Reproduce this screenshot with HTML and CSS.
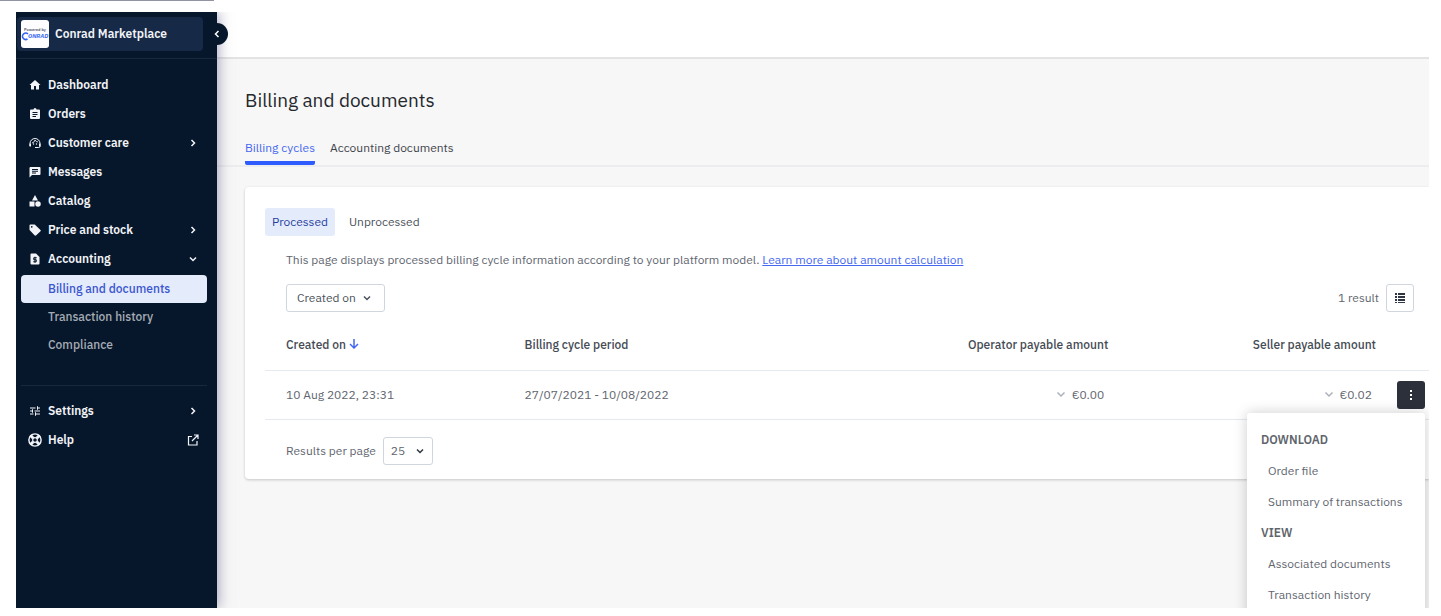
FILE: index.html
```html
<!DOCTYPE html>
<html lang="en">
<head>
<meta charset="utf-8">
<title>Billing and documents</title>
<link rel="stylesheet" href="styles.css">
</head>
<body>
<div class="strip"></div>
<div class="frame">
  <aside class="sidebar">
    <div class="brand-area">
      <div class="brand">
        <svg class="brand-logo" viewBox="0 0 28 28" aria-hidden="true">
          <rect width="28" height="28" rx="3" fill="#fdfdff"/>
          <text x="14" y="11" text-anchor="middle" font-size="4" fill="#555b70">Powered by</text>
          <path d="M7 14A3.200 3.200 0 1 0 6.500 19" fill="none" stroke="#2f62f0" stroke-width="1.500"/>
          <text x="7" y="18" font-size="6" font-weight="700" font-style="italic" fill="#3b6cf2">ONRAD</text>
        </svg>
        <span>Conrad Marketplace</span>
      </div>
      <button class="collapse" aria-label="Collapse menu">
        <svg class="ico-s" viewBox="0 0 10 10"><path d="M6.500 2L3.500 5l3 3" class="line"/></svg>
      </button>
    </div>
    <nav class="nav">
      <a class="item" href="#"><svg class="ico" viewBox="0 0 24 24"><path d="M10 21v-7h4v7h6v-9h3L12 2 1 12h3v9z"/></svg><span>Dashboard</span></a>
      <a class="item" href="#"><svg class="ico" viewBox="0 0 24 24"><path fill-rule="evenodd" d="M20 3h-5a3 3 0 0 0-6 0H4a2 2 0 0 0-2 2v15a2 2 0 0 0 2 2h16a2 2 0 0 0 2-2V5a2 2 0 0 0-2-2zM7 8h10v2H7zm0 4h10v2H7zm0 4h7v2H7z"/></svg><span>Orders</span></a>
      <a class="item" href="#"><svg class="ico" viewBox="0 0 24 24"><path d="M2 18v-5a10 10 0 0 1 20 0v6q0 2-3 2h-7" fill="none" stroke="currentColor" stroke-width="2"/><path d="M1 13h3v6H1zM20 13h3v6h-3z"/><circle cx="9" cy="14" r="1.300"/><circle cx="15" cy="14" r="1.300"/><path d="M6 12q5-1 6-6 2 4 6 4" fill="none" stroke="currentColor" stroke-width="1.700"/></svg><span>Customer care</span><svg class="ico-s" viewBox="0 0 10 10"><path d="M3.500 2l3 3-3 3" class="line"/></svg></a>
      <a class="item" href="#"><svg class="ico" viewBox="0 0 24 24"><path fill-rule="evenodd" d="M3 2a2 2 0 0 0-2 2v19l5-5h15a2 2 0 0 0 2-2V4a2 2 0 0 0-2-2zM6 6h12v2H6zm0 3.500h12v2H6zM6 13h8v2H6z"/></svg><span>Messages</span></a>
      <a class="item" href="#"><svg class="ico" viewBox="0 0 24 24"><path d="M12 0l6 11H6zM1 13h10v10H1z"/><circle cx="18" cy="18" r="5.500"/></svg><span>Catalog</span></a>
      <a class="item" href="#"><svg class="ico" viewBox="0 0 24 24"><path fill-rule="evenodd" d="M23 12L13 2.500A2 2 0 0 0 11 1H3a2 2 0 0 0-2 2v8q0 1 .6 1.500L11 22.500q2 1.500 3.500 0l8.500-8q1.200-1.300 0-2.500zM5.500 7.500a1.800 1.800 0 1 1 0-3.600 1.800 1.800 0 0 1 0 3.600z"/></svg><span>Price and stock</span><svg class="ico-s" viewBox="0 0 10 10"><path d="M3.500 2l3 3-3 3" class="line"/></svg></a>
      <a class="item" href="#"><svg class="ico" viewBox="0 0 24 24"><path d="M14 1H5a2 2 0 0 0-2 2v18a2 2 0 0 0 2 2h14a2 2 0 0 0 2-2V8z"/><path d="M15.500 9.500H9.500v4h5v4h-6M12 7.500v12" fill="none" stroke="#07172b" stroke-width="2"/></svg><span>Accounting</span><svg class="ico-s" viewBox="0 0 10 10"><path d="M2 3.500l3 3 3-3" class="line"/></svg></a>
      <div class="subnav">
        <a class="sub active" href="#">Billing and documents</a>
        <a class="sub" href="#">Transaction history</a>
        <a class="sub" href="#">Compliance</a>
      </div>
      <div class="lower">
        <a class="item" href="#"><svg class="ico" viewBox="0 0 24 24"><path d="M2 6h11M17 6h5M17 2.500v7M2 12h5M11 12h11M7 8.500v7M2 18h7M13 18h9M13 14.500v7" fill="none" stroke="currentColor" stroke-width="2"/></svg><span>Settings</span><svg class="ico-s" viewBox="0 0 10 10"><path d="M3.500 2l3 3-3 3" class="line"/></svg></a>
        <a class="item" href="#"><svg class="ico help" viewBox="0 0 24 24"><circle cx="12" cy="12" r="10.500" fill="none" stroke="currentColor" stroke-width="2.500"/><path d="M4 4l5 5M20 4l-5 5M4 20l5-5M20 20l-5-5" stroke="currentColor" stroke-width="5"/><circle cx="12" cy="12" r="4" fill="#07172b" stroke="currentColor" stroke-width="2"/></svg><span>Help</span><svg class="ico ext" viewBox="0 0 24 24"><path d="M10 5H3v17h17v-8M14 2h8v8M22 2L10 14" fill="none" stroke="currentColor" stroke-width="2.400"/></svg></a>
      </div>
    </nav>
  </aside>
  <main class="main">
    <div class="topbar"></div>
    <header class="heading">
      <h1>Billing and documents</h1>
      <nav class="tabs"><a class="tab current" href="#">Billing cycles</a><a class="tab" href="#">Accounting documents</a></nav>
    </header>
    <section class="card">
      <div class="pills"><button class="pill on">Processed</button><button class="pill">Unprocessed</button></div>
      <p class="intro">This page displays processed billing cycle information according to your platform model. <a href="#">Learn more about amount calculation</a></p>
      <div class="toolbar">
        <button class="filter">Created on <svg class="ico-s" viewBox="0 0 10 10"><path d="M2 3.500l3 3 3-3" class="line"/></svg></button>
        <div class="result"><span>1 result</span><button class="square" aria-label="Columns"><svg viewBox="0 0 12 12" width="12" height="12"><path d="M1 1h2v2H1zM4 1h7v2H4zM1 4h2v2H1zM4 4h7v2H4zM1 7h2v2H1zM4 7h7v2H4zM1 10h2v1H1zM4 10h7v1H4z"/></svg></button></div>
      </div>
      <table class="table">
        <thead><tr>
          <th class="c-date">Created on <svg class="sort" viewBox="0 0 10 10"><path d="M5 0v9M1 5l4 4 4-4" class="line"/></svg></th>
          <th class="c-period">Billing cycle period</th><th class="c-op num">Operator payable amount</th><th class="c-seller num">Seller payable amount</th><th class="c-act"></th>
        </tr></thead>
        <tbody><tr>
          <td class="c-date">10 Aug 2022, 23:31</td><td>27/07/2021 - 10/08/2022</td>
          <td class="num"><svg class="ico-s pale" viewBox="0 0 10 10"><path d="M1.500 3.500L5 7l3.500-3.500" class="line"/></svg>€0.00</td>
          <td class="num"><svg class="ico-s pale" viewBox="0 0 10 10"><path d="M1.500 3.500L5 7l3.500-3.500" class="line"/></svg>€0.02</td>
          <td class="c-act"><div class="actions">
            <button class="more" aria-label="Actions"><svg viewBox="0 0 12 12" width="12" height="12"><path d="M5 1h2v2H5zM5 5h2v2H5zM5 9h2v2H5z"/></svg></button>
            <div class="menu">
              <h2>DOWNLOAD</h2><a href="#">Order file</a><a href="#">Summary of transactions</a>
              <h2>VIEW</h2><a href="#">Associated documents</a><a href="#">Transaction history</a>
            </div>
          </div></td>
        </tr></tbody>
      </table>
      <div class="pager"><label for="size">Results per page</label>
        <div class="select-wrap"><select id="size"><option>25</option></select><svg class="ico-s" viewBox="0 0 10 10"><path d="M2 3.500l3 3 3-3" class="line"/></svg></div>
      </div>
    </section>
  </main>
</div>
</body>
</html>
```
FILE: styles.css
```css
* { box-sizing: border-box; }
body { margin: 0; background: #fff; color: #5f6670; font: 12px/16px "IBM Plex Sans", "Noto Sans", sans-serif; }
a { color: inherit; text-decoration: none; }
button { font: inherit; color: inherit; cursor: pointer; }
svg { flex: none; fill: currentColor; }
.line { fill: none; stroke: currentColor; stroke-width: 1.5; }
.strip { width: 214px; height: 1px; background: #9294a3; }
.frame { display: flex; min-height: calc(100vh - 20px); margin: 11px 12px 8px 16px; overflow: hidden; }

.sidebar { flex: none; width: 201px; background: #07172b; color: #f2f4f8; position: relative; z-index: 1; box-shadow: 2px 0 12px #5c5c8c80; }
.brand-area { position: relative; height: 47px; padding: 5px 14px 6px 1px; border-bottom: 1px solid #17283d; }
.brand { display: flex; align-items: center; gap: 6px; height: 34px; padding-left: 4px; border-radius: 4px; background: #162947; font-weight: 600; }
.brand-logo { width: 28px; height: 28px; }
.collapse { position: absolute; right: -11px; top: 11px; width: 22px; height: 22px; padding: 0; border: 0; border-radius: 50%; background: #07172b; color: #fff; display: grid; place-items: center; }
.ico { width: 12px; height: 12px; }
.ico-s { width: 10px; height: 10px; }
.nav { padding: 11px 10px 0 5px; }
.item { display: flex; align-items: center; gap: 7px; height: 29px; padding: 0 9px 0 8px; font-weight: 600; }
.item span { flex: 1; }
.help { width: 14px; height: 14px; margin: 0 -1px; }
.ext { margin-right: -1px; }
.subnav { padding: 2px 0 26px; border-bottom: 1px solid #17283d; }
.sub { display: flex; align-items: center; height: 28px; padding-left: 27px; border-radius: 4px; color: #a6acb5; font-weight: 500; }
.active { background: #e4ebfb; color: #3a56cf; }
.lower { padding-top: 10px; }

.main { flex: 1; min-width: 0; background: #f7f7f7; }
.topbar { height: 47px; background: #fff; border-bottom: 2px solid #e3e3e4; }
.heading { padding: 27px 28px 0; border-bottom: 2px solid #ededef; }
h1 { margin: 0; font-size: 19px; line-height: 28px; font-weight: 400; color: #25282d; }
.tabs { display: flex; gap: 15px; margin-top: 26px; color: #3d434b; }
.tab { padding-bottom: 5px; border-bottom: 4px solid transparent; }
.current { color: #4568f0; border-color: #2f5cff; border-radius: 2px; }
.card { margin: 20px 0 0 28px; padding: 21px 0 14px 20px; background: #fff; border-radius: 4px 0 0 4px; box-shadow: 0 1px 3px #00000033; }
.pills { display: flex; gap: 7px; }
.pill { height: 28px; padding: 0 7px; border: 0; border-radius: 3px; background: none; color: #4c525b; }
.on { background: #e4ebfb; color: #293f9f; }
.intro { margin: 16px 0 16px 21px; }
.intro a { color: #4568f0; text-decoration: underline; }
.toolbar { display: flex; justify-content: space-between; align-items: center; padding: 0 15px 0 21px; }
.filter { display: flex; align-items: center; gap: 6px; height: 28px; padding: 0 12px 0 10px; border: 1px solid #cfd6de; border-radius: 3px; background: #fff; color: #4c525b; }
.result { display: flex; align-items: center; gap: 7px; }
.square { width: 28px; height: 28px; padding: 0; border: 1px solid #cfd6de; border-radius: 3px; background: #fff; display: grid; place-items: center; color: #30363f; }
.table { width: 100%; margin-top: 9px; border-collapse: collapse; table-layout: fixed; }
th, td { height: 49px; padding: 0; border-bottom: 1px solid #e5eaf0; text-align: left; font-weight: 400; white-space: nowrap; }
th { font-weight: 500; color: #454b54; }
.table .c-date { width: 22.3%; padding-left: 21px; }
.c-op { width: 25%; }
.c-seller { width: 23%; }
.table .c-act { width: 53px; padding-left: 21px; }
.table .num { text-align: right; }
td.num { padding-right: 4px; }
.sort { width: 10px; height: 10px; color: #4568f0; }
.pale { margin-right: 6px; color: #aab2bd; }
.actions { position: relative; width: 28px; }
.more { display: grid; place-items: center; width: 28px; height: 28px; padding: 0; border: 0; border-radius: 3px; background: #2b303b; color: #fff; }
.menu { position: absolute; right: 0; top: 32px; width: 178px; padding: 11px 14px 12px; border-radius: 3px; background: #fff; box-shadow: 0 0 14px #00000033; }
.menu h2 { margin: 0; font-size: 12px; line-height: 31px; font-weight: 600; color: #60656c; }
.menu a { display: block; padding-left: 7px; line-height: 31px; }
.pager { display: flex; align-items: center; gap: 7px; padding: 17px 0 0 21px; }
.select-wrap { display: grid; align-items: center; justify-items: end; }
.select-wrap > * { grid-area: 1 / 1; }
.select-wrap svg { margin-right: 8px; pointer-events: none; color: #30363f; }
select { appearance: none; width: 50px; height: 28px; padding: 0 7px; border: 1px solid #cfd6de; border-radius: 3px; background: #fff; color: inherit; font: inherit; }
```
